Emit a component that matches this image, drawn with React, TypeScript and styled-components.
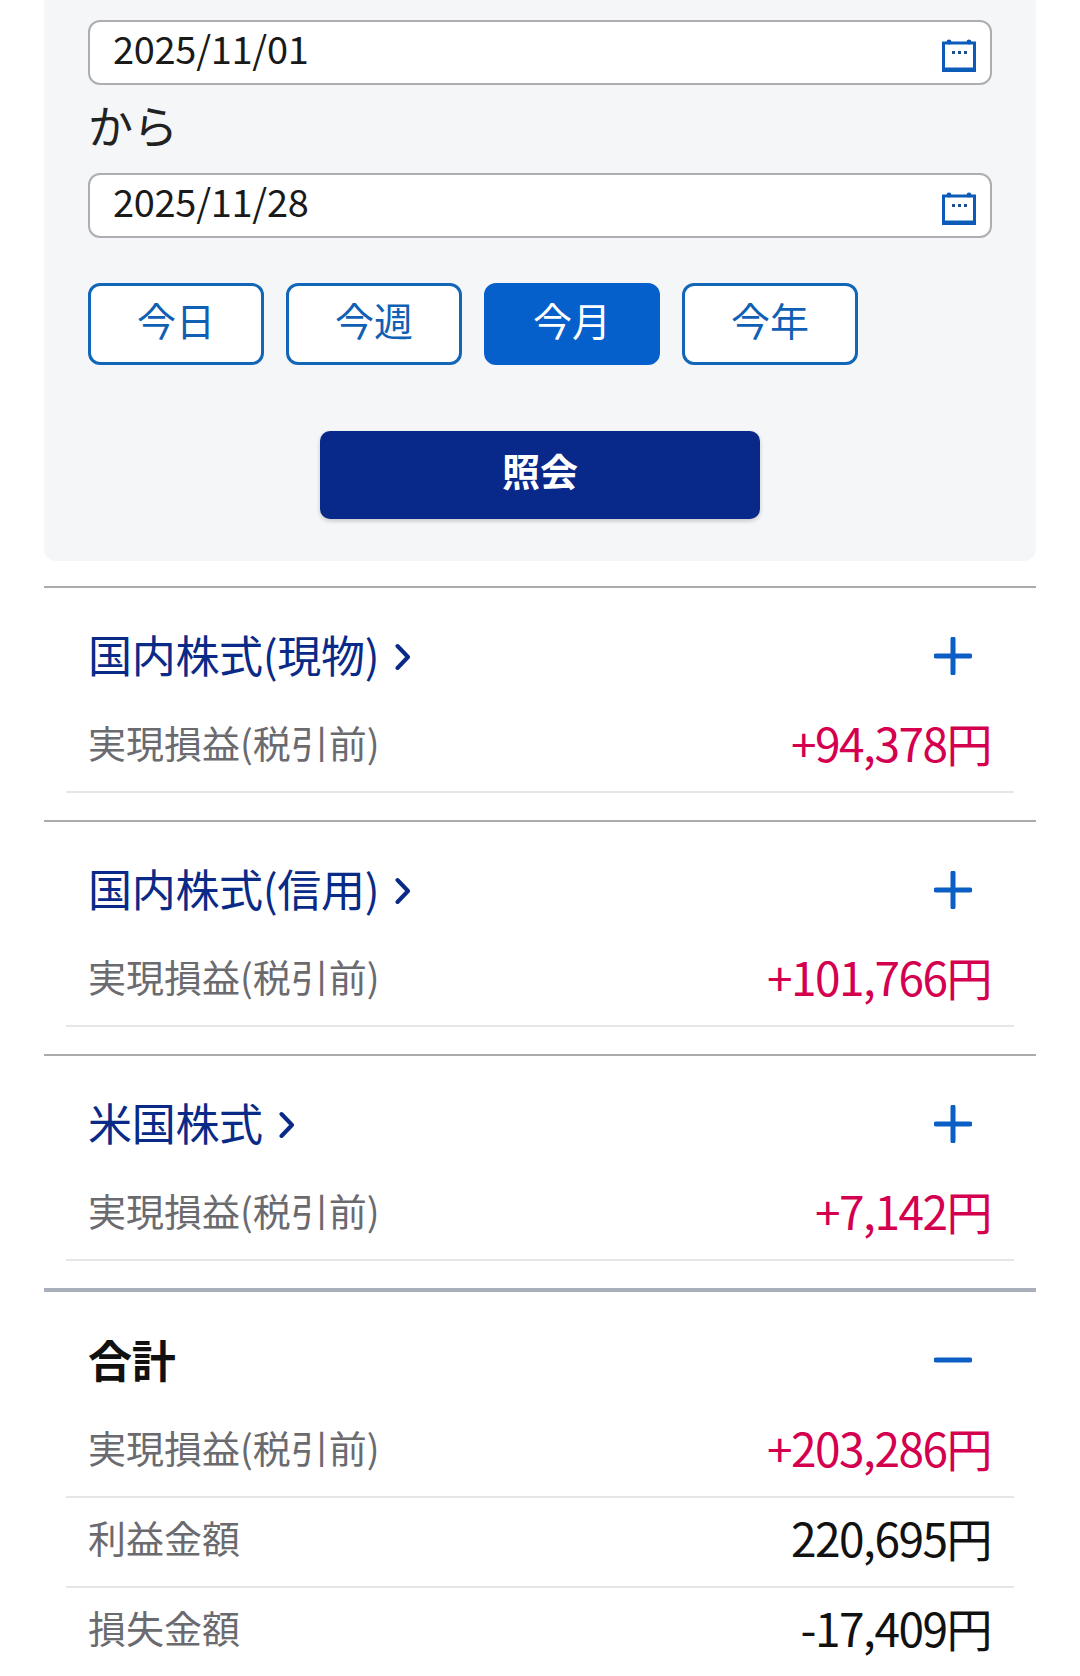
import React from 'react';
import styled, { createGlobalStyle } from 'styled-components';

const FONT = `"Noto Sans CJK JP", "Noto Sans", sans-serif`;

const GlobalStyle = createGlobalStyle`
  html, body {
    margin: 0;
    padding: 0;
    background: #fff;
    font-family: ${FONT};
  }
  * { box-sizing: border-box; }
`;

interface Row {
  label: string;
  value: string;
  tone?: 'plus' | 'plain';
}

interface Section {
  title: string;
  link: boolean;
  open?: boolean;
  rows: Row[];
}

const sections: Section[] = [
  { title: '国内株式(現物)', link: true, rows: [{ label: '実現損益(税引前)', value: '+94,378円', tone: 'plus' }] },
  { title: '国内株式(信用)', link: true, rows: [{ label: '実現損益(税引前)', value: '+101,766円', tone: 'plus' }] },
  { title: '米国株式', link: true, rows: [{ label: '実現損益(税引前)', value: '+7,142円', tone: 'plus' }] },
  {
    title: '合計',
    link: false,
    open: true,
    rows: [
      { label: '実現損益(税引前)', value: '+203,286円', tone: 'plus' },
      { label: '利益金額', value: '220,695円' },
      { label: '損失金額', value: '-17,409円' },
    ],
  },
];

const CalendarIcon = () => (
  <CalendarSvg viewBox="0 0 34 33" fill="none">
    <path d="M1.5 4h31v27.5h-31z" stroke="#0b5cb8" strokeWidth="3" />
    <path d="M1 28.5h32v4H1z" fill="#0b5cb8" />
    <circle cx="7" cy="3" r="2.4" fill="#0b5cb8" />
    <circle cx="27" cy="3" r="2.4" fill="#0b5cb8" />
    <path d="M10 12h3v3h-3zM16 12h3v3h-3zM22 12h3v3h-3z" fill="#1f4f8f" />
  </CalendarSvg>
);

const PlusIcon = () => (
  <ToggleSvg viewBox="0 0 38 38" fill="none">
    <path d="M19 2v34M2 19h34" stroke="#0b5fc4" strokeWidth="5" strokeLinecap="round" />
  </ToggleSvg>
);

const MinusIcon = () => (
  <ToggleSvg viewBox="0 0 38 38" fill="none">
    <path d="M2 19h34" stroke="#0b5fc4" strokeWidth="5" strokeLinecap="round" />
  </ToggleSvg>
);

const Chevron = () => (
  <ChevronSvg viewBox="0 0 16 28" fill="none">
    <path d="M2.5 3L13 14 2.5 25" stroke="#0a2a88" strokeWidth="4" strokeLinecap="round" strokeLinejoin="round" />
  </ChevronSvg>
);

const App: React.FC = () => (
  <Page>
    <GlobalStyle />
    <Panel>
      <DateField>
        <DateText>2025/11/01</DateText>
        <CalendarIcon />
      </DateField>
      <Kara>から</Kara>
      <DateField>
        <DateText>2025/11/28</DateText>
        <CalendarIcon />
      </DateField>
      <RangeRow>
        <RangeButton>今日</RangeButton>
        <RangeButton>今週</RangeButton>
        <RangeButton $active>今月</RangeButton>
        <RangeButton>今年</RangeButton>
      </RangeRow>
      <SubmitRow>
        <SubmitButton>照会</SubmitButton>
      </SubmitRow>
    </Panel>

    {sections.map((section) => (
      <SectionBox key={section.title} $total={!!section.open}>
        <SectionHead $total={!!section.open}>
          <SectionTitle $link={section.link}>
            {section.title}
            {section.link && <Chevron />}
          </SectionTitle>
          {section.open ? <MinusIcon /> : <PlusIcon />}
        </SectionHead>
        {section.rows.map((row) => (
          <DataRow key={row.label}>
            <RowLabel>{row.label}</RowLabel>
            <RowValue $tone={row.tone}>{row.value}</RowValue>
          </DataRow>
        ))}
      </SectionBox>
    ))}
  </Page>
);

export default App;

// Styled components

const Page = styled.div`
  width: 1080px;
  height: 1676px;
  overflow: hidden;
  padding: 0 44px;
  background: #fff;
`;

const Panel = styled.div`
  height: 561px;
  margin-bottom: 25px;
  padding: 20px 44px 0;
  background: #f5f6f8;
  border-radius: 0 0 12px 12px;
`;

const DateField = styled.div`
  display: flex;
  align-items: center;
  justify-content: space-between;
  height: 65px;
  padding: 0 14px 0 23px;
  background: #fff;
  border: 2px solid #aeaeb2;
  border-radius: 12px;
`;

const DateText = styled.span`
  font-size: 38px;
  line-height: 60px;
  margin-top: -10px;
  letter-spacing: -0.3px;
  color: #1a1a1a;
`;

const CalendarSvg = styled.svg`
  width: 34px;
  height: 33px;
  margin-top: 5px;
`;

const Kara = styled.div`
  height: 88px;
  font-size: 45px;
  line-height: 80px;
  color: #222;
`;

const RangeRow = styled.div`
  display: flex;
  gap: 22px;
  margin-top: 45px;
`;

const RangeButton = styled.button<{ $active?: boolean }>`
  width: 176px;
  height: 82px;
  padding: 0 0 10px;
  font-family: ${FONT};
  font-size: 39px;
  color: ${(props) => (props.$active ? '#fff' : '#0f60b4')};
  background: ${(props) => (props.$active ? '#0660cc' : '#fff')};
  border: 3px solid ${(props) => (props.$active ? '#0660cc' : '#1266b8')};
  border-radius: 12px;
`;

const SubmitRow = styled.div`
  display: flex;
  justify-content: center;
  margin-top: 66px;
`;

const SubmitButton = styled.button`
  width: 440px;
  height: 88px;
  padding: 0 0 12px;
  font-family: ${FONT};
  font-size: 38px;
  font-weight: 700;
  color: #fff;
  background: #08288a;
  border: none;
  border-radius: 10px;
  box-shadow: 0 2px 4px rgba(0, 0, 0, 0.2);
`;

const SectionBox = styled.section<{ $total: boolean }>`
  border-top: ${(props) => (props.$total ? '4px solid #a9aebb' : '2px solid #aaa')};

  & + & {
    margin-top: 27px;
  }
`;

const SectionHead = styled.div<{ $total: boolean }>`
  display: flex;
  align-items: center;
  justify-content: space-between;
  height: ${(props) => (props.$total ? '116px' : '115px')};
  padding: 20px 64px 0 44px;
`;

const SectionTitle = styled.div<{ $link: boolean }>`
  display: flex;
  align-items: center;
  gap: 16px;
  margin-top: -3px;
  font-size: 44px;
  letter-spacing: -0.3px;
  font-weight: ${(props) => (props.$link ? 400 : 700)};
  color: ${(props) => (props.$link ? '#0a2a88' : '#111')};
`;

const ChevronSvg = styled.svg`
  width: 16px;
  height: 28px;
  margin-top: 6px;
`;

const ToggleSvg = styled.svg`
  width: 38px;
  height: 38px;
`;

const DataRow = styled.div`
  display: flex;
  align-items: center;
  justify-content: space-between;
  height: 90px;
  margin: 0 22px;
  padding: 0 22px 10px;
  border-bottom: 2px solid #e6e6e8;
`;

const RowLabel = styled.span`
  font-size: 38px;
  margin-bottom: 2px;
  color: #6a6a6f;
`;

const RowValue = styled.span<{ $tone?: 'plus' | 'plain' }>`
  font-size: 46px;
  letter-spacing: -1.5px;
  margin-right: 1px;
  color: ${(props) => (props.$tone === 'plus' ? '#d4004f' : '#111')};
`;
